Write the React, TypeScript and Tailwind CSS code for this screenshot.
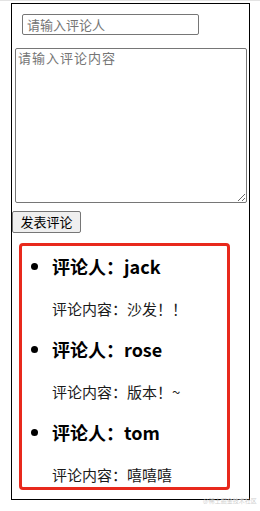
import { useState } from 'react'

type Comment = { id: number; name: string; content: string }

const COMMENTS: Comment[] = [
  { id: 1, name: 'jack', content: '沙发！！' },
  { id: 2, name: 'rose', content: '版本！~' },
  { id: 3, name: 'tom', content: '嘻嘻嘻' },
]

const FONT = "font-['Microsoft_YaHei','Noto_Sans_CJK_SC','Noto_Sans',sans-serif]"

export default function App() {
  const [name, setName] = useState('')
  const [content, setContent] = useState('')

  return (
    <div className={`relative min-h-[511px] w-[260px] bg-white border-t border-[#e3e3e3] pt-[2px] ${FONT}`}>
      {/* Outer box */}
      <div className="ml-[11px] w-[239px] border border-black pb-[9px]">
        <input
          value={name}
          onChange={e => setName(e.target.value)}
          placeholder="请输入评论人"
          className="ml-[10px] mt-[10px] block h-[21px] w-[177px] rounded-[2px] border border-[#767676] px-[4px] text-[13px] leading-[19px] text-black placeholder:text-[#757575] outline-none"
        />
        <textarea
          value={content}
          onChange={e => setContent(e.target.value)}
          placeholder="请输入评论内容"
          className="ml-[3px] mt-[13px] block h-[155px] w-[232px] rounded-[2px] border border-[#767676] px-[2px] py-0 text-[13px] leading-[17px] tracking-[1px] placeholder:text-[#757575] outline-none"
        />
        <button className="mt-[8px] block h-[22px] w-[69px] rounded-[2px] border border-[#767676] bg-[#efefef] text-[13px] leading-[20px] text-black">
          发表评论
        </button>

        {/* Comment list */}
        <div className="ml-[7px] mt-[10px] h-[247px] w-[211px] rounded-[4px] border-[3px] border-[#e8291c]">
          <ul className="list-disc pl-[30px] pt-[8px]">
            {COMMENTS.map((c, i) => (
              <li key={c.id} className={`text-[18px] font-bold leading-[24px] text-black ${i > 0 ? 'mt-[18px]' : ''}`}>
                <div>评论人：{c.name}</div>
                <div className="mt-[21px] text-[15px] font-normal leading-[20px] text-[#1a1a1a]">
                  评论内容：{c.content}
                </div>
              </li>
            ))}
          </ul>
        </div>
      </div>

      {/* watermark */}
      <div className="absolute left-[203px] top-[497px] text-[6px] leading-[6px] text-[#d0d0d0]">@稀土掘金技术社区</div>
    </div>
  )
}
